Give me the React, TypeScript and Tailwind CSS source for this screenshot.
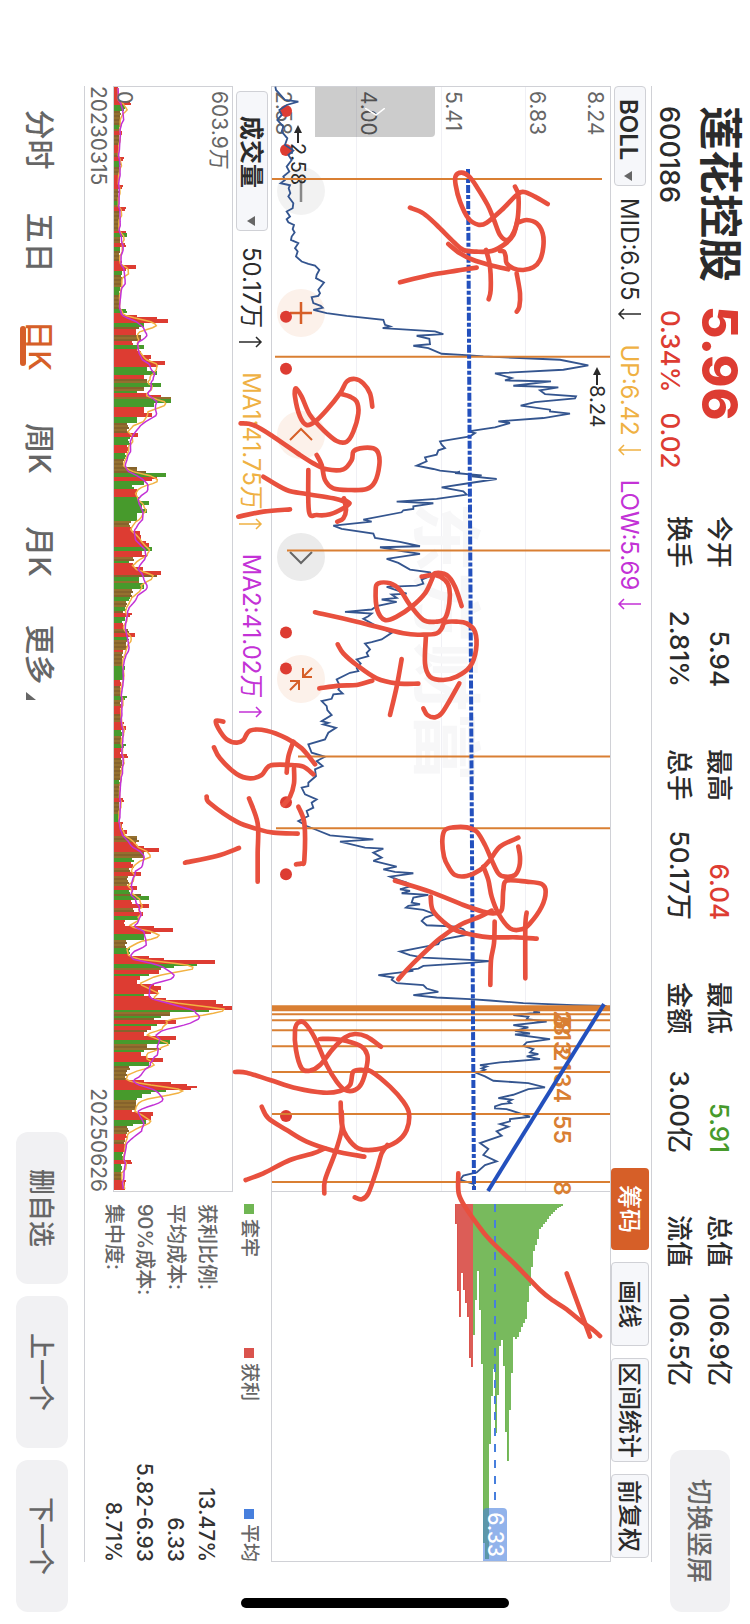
import type { ReactNode } from "react";

type Point = [number, number];

/* Drawing units are thirds of a pixel, measured with the phone held upright. */
const UPRIGHT = "matrix(0 -1 1 0 0 750)";
const ROWS = [
  "translate(190 60) scale(0.33333)",
  "translate(190 460) scale(0.33333)",
  "translate(190 860) scale(0.33333)",
];

const toPoints = (text: string): Point[] =>
  text
    .trim()
    .split(/\s+/)
    .map((pair) => pair.split(",").map(Number) as Point);

function smooth(text: string) {
  const p = toPoints(text);
  let d = `M${p[0][0]} ${p[0][1]}`;
  for (let i = 0; i < p.length - 1; i++) {
    const a = p[i - 1] ?? p[i];
    const b = p[i];
    const c = p[i + 1];
    const e = p[i + 2] ?? c;
    d += `C${b[0] + (c[0] - a[0]) / 6} ${b[1] + (c[1] - a[1]) / 6} ${c[0] - (e[0] - b[0]) / 6} ${c[1] - (e[1] - b[1]) / 6} ${c[0]} ${c[1]}`;
  }
  return d;
}

const PRICE = [
  "256,80 258,90 272,105 285,120 325,125 290,135 268,150 275,165 262,180 280,200 275,215 292,235 285,255 310,272 295,285 305,300 290,320 298,335 280,350 285,360 272,370 300,376 296,385 301,400 295,410 310,430 308,445 290,455 300,470 290,478 295,487 312,495 308,508 314,518 305,530 303,540 325,550 315,565 323,575 318,590 335,605 355,612 375,617 388,630 380,645 378,655 402,668 385,690 390,700 385,708 365,712 370,730 392,738 398,744 370,750 410,760 470,768 580,780 585,795 600,800 578,805 735,815 760,823 680,828 718,837 720,853 670,858 715,865 755,882 840,887 880,890 1110,900 1195,917 1120,930 915,941 965,955 945,962 1083,965 970,978 1105,983 1050,992 1065,1003 1158,1010 1155,1016 1035,1027 992,1038 1080,1050 1080,1055 1140,1062 1060,1075 925,1085 960,1090 915,1103 835,1115 855,1120 840,1130 750,1145 755,1155 765,1165 745,1172 740,1185 705,1193 710,1205 680,1218 730,1228 750,1233 800,1238",
  "800,38 810,36 795,40 875,47 845,50 920,58 840,70 755,83 820,95 830,105 740,118 620,126 730,131 670,140 670,148 640,152 635,158 520,180 545,186 430,198 455,208 550,222 555,235 630,247 690,260 570,263 640,275 690,283 590,298 625,310 660,330 720,338 725,348 695,360 700,372 680,378 590,382 650,402 605,405 620,415 575,420 620,427 560,440 545,450 465,457 545,462 535,470 520,478 560,500 605,520 575,540 545,548 525,552 540,570 530,580 535,590 500,600 512,612 500,625 505,635 480,640 440,660 450,680 445,690 458,702 430,705 425,718 395,725 410,740 412,752 425,767 395,785 415,790 400,795 438,805 415,820 405,840 355,855 365,880 405,892 380,905 398,920 375,930 378,950 355,970 355,980 335,985 345,1005 380,1020 365,1030 370,1045 350,1055 355,1070 325,1085 350,1100 380,1112 420,1128 550,1140 450,1147 525,1165 580,1168 550,1180 575,1195 550,1205",
  "550,5 620,22 580,30 615,38 670,42 600,52 625,62 650,70 665,80 630,90 660,95 635,102 715,107 670,115 665,130 690,135 655,140 648,145 700,152 735,165 705,175 695,185 710,198 800,202 820,210 825,216 840,225 770,238 750,245 745,255 690,265 630,277 660,288 700,295 840,302 900,306 840,311 700,320 685,328 655,332 670,335 565,348 610,355 605,362 620,372 700,378 710,388 745,398 670,408 740,415 840,420 900,424 1000,432 1150,438 1250,440",
  "1030,457 1050,460 970,468 1015,473 1010,480 1070,487 970,498 1015,505 975,515 1020,523 975,526 1080,540 1010,550 1000,560 1030,570 1020,580 1045,585 1010,592 1050,600 930,610 870,618 890,622 875,628 885,632 860,642 885,652 910,665 1015,672 1065,685 1015,690 970,707 925,717 965,722 955,727 962,732 935,735 915,742 915,748 950,750 1020,773 960,780 960,787 930,795 955,803 920,817 935,830 870,852 895,870 880,888 920,907 885,918 860,940 820,950 810,962 850,975 855,990",
];

const INK: string[][] = [
  [
    "1073,432 1035,410 1002,396 980,405 935,450 890,488 865,494 835,475 810,425 797,375 797,348 815,338 838,350 860,380 893,435 912,480 930,525 952,540 972,515 983,475 986,430 984,400 975,380",
    "983,480 970,525 945,552 905,573 860,575 820,570 790,545 740,495 700,460 660,443",
    "985,487 1010,480 1040,490 1058,520 1060,560 1050,600 1030,622 1000,630 970,625 950,610 947,590 942,575 930,573",
    "955,628 900,615 850,600 810,580 775,552",
    "860,623 800,632 720,645 630,667",
    "888,570 900,620 902,690 896,718",
    "980,640 990,700 988,740 980,755",
    "547,1040 540,1000 520,970 495,957 470,965 450,1000 410,1050 375,1085 350,1095 330,1070 315,1010 318,985 335,1010 360,1065 400,1110 440,1143 470,1145 490,1115 505,1060 500,1025 480,1010 455,1002",
    "152,1090 190,1095 250,1130 330,1185 370,1210 410,1228 460,1228 485,1200 490,1175 510,1165 550,1165 565,1180 568,1215 555,1265 530,1287 480,1290 430,1285 405,1260 395,1215 380,1185",
  ],
  [
    "220,50 290,90 350,102 430,115 478,130",
    "355,30 357,155 380,165 420,163 460,145 478,130 460,118",
    "462,115 468,150 460,175 442,185",
    "300,148 220,155 145,170",
    "815,438 795,380 770,345 735,340 725,360 705,400 665,440 620,470 585,480 562,450 557,390 565,370 600,370 630,390 660,435 700,480 740,485 765,475 778,430 778,385 765,360 735,345 695,350",
    "375,457 500,485 640,520 700,524 740,520 755,505 765,487 800,485 830,490 855,515 858,570 840,620 800,650 760,660 720,650 705,610 708,525",
    "443,553 460,580 500,615 560,655 620,670 685,671",
    "635,597 620,680 600,765",
    "547,662 500,675 450,677 388,685",
    "808,670 780,720 755,760 735,772 712,765 700,745",
    "100,785 78,782 85,805 110,838 140,848 160,840 180,812 230,812 290,835 335,865 375,913",
    "310,845 295,890 290,938",
    "72,862 90,895 140,942 180,955 215,945 240,917 300,915 340,920 370,943",
    "312,925 312,970 300,1010 280,1035",
    "50,1010 60,1030 140,1085 205,1108 250,1118 323,1121",
    "177,1015 203,1090 203,1180 203,1265",
    "147,1164 80,1188 -15,1208",
    "325,1040 343,1090 343,1200 335,1210 318,1213",
  ],
  [
    "985,-67 930,-40 900,0 870,30 830,48 795,45 775,20 762,-10 757,-60 765,-90 790,-98 830,-98 860,-85 885,-45 905,0 925,40 945,50 975,45 988,20 990,-10 985,-40",
    "880,20 895,60 905,110 925,160 960,205 995,208 1020,190 1055,140 1067,95 1055,72 1010,65 950,62 940,90 935,150 910,160 880,155 820,135 720,95 615,62",
    "905,152 870,170 810,195 750,235 690,290 650,330 625,358",
    "722,110 728,150 760,185 800,212 850,225 900,232 980,232 1040,236",
    "914,185 912,250 903,300 901,375",
    "1010,158 1006,200 1006,355",
    "573,560 530,530 495,522 465,532 430,565 390,615 360,632 335,625 318,570 315,510 325,488 345,490 375,535 410,615 440,665 465,690 495,690 515,670 530,620 532,585 515,560 470,543 430,537 390,537",
    "135,636 170,638 240,660 320,685 400,698 450,693 480,675 490,635 520,630 545,635 600,680 640,725 657,760 650,810 620,845 560,868 505,865 470,830 455,790 452,728",
    "455,755 455,810 435,880 405,960 403,1000",
    "592,855 575,880 560,930 535,1000 515,1018 494,1012",
    "215,740 235,775 290,810 350,845 430,872 523,890",
    "405,865 370,880 300,900 220,940 167,960",
    "805,940 806,1000 825,1040 860,1090 900,1140 980,1218 1050,1290 1090,1322 1130,1348 1175,1385 1210,1410 1230,1428",
    "1130,1240 1200,1430",
  ],
];

/* Volume runs: end position, colour (r rise, g fall, m mixed), height. */
const VOLUME: { from: number; runs: string }[] = [
  {
    from: 0,
    runs: "122r14 134r52 150g35 195m20 205g18 213m16 225r27 255m16 280r14 290m14 302r30 322g20 345m15 375r14 385r26 420m14 432g14 440m15 452r36 512m16 520r40 530g40 548m20 560r37 570g20 605m18 615r25 627r66 633r42 645g25 680m25 702g18 745m18 757g40 767r30 772r70 778r130 788r162 800g90 808m75 822r65 840m80 855r60 865g90 875r70 885r80 897r112 903r105 915r152 921r130 933g100 945g130 957r90 968m100 980g140 993m90 1000g70 1005r100 1011r140 1017m170 1028g172 1040g120 1060r90 1072r115 1090g70 1118m45 1130r72 1155g50 1178r45 1195g35 1222m30 1235m68 1240m95 1250g155 1258r130 1265r115 1275g90 1287g60 1310r70 1322g75",
  },
  {
    from: 1320,
    runs: "15g105 25g85 38g98 60g70 80m50 92r60 105r78 120r80 130r95 142r105 152g114 162r85 172r100 180m60 188g50 200r60 213r88 225r140 232m130 240g75 250m75 265g90 288m60 305g50 320m40 330g35 338m30 350r55 360g35 370g28 388r30 398m45 410r62 425g50 450m40 460r30 500m28 515g34 540g30 560r22 590m22 602g38 620m22 645r22 668m25 680r32 692r38 712g25 735m22 747g36 765r22 777r42 800m25 840m22 855g18 895m18 908r30 945m16 968g16 980r28 992r26 1005r42 1012r35 1020m70 1030m75 1040r65 1047r90 1058r136 1075m90 1090g60 1105r60 1118m50 1130r82 1160m45 1172r68 1185g50",
  },
  {
    from: 2460,
    runs: "20m50 32r67 45g60 50m82 62g105 75r60 87r104 98m60 110r86 125g72 140r35 147r120 158r178 165r110 180g90 205m40 222g50 232r42 237r105 243r150 255r302 261g250 267g180 275m140 285r135 292g105 303r78 315r70 322r120 333r140 345r132 350g90 358r110 364r155 375r305 381r328 392r355 400g285 410m168 417g140 424m120 435r186 442g130 452r110 460m100 472r90 484r187 495g168 505m100 512m140 518g90 530r80 538r100 549r146 560g105 572m50 600m40 606r90 612r172 618r220 628r248 633r232 640g155 645g110 655g85 665g70 690m65 700r60 710r118 722r110 732g95 740g58 765m45 780r38 792m35 820r35 840g28 855r57 880g25 900m25 936r35",
  },
];

const RUNS = VOLUME.flatMap(({ from, runs }) =>
  runs.split(" ").map((run) => {
    const [, end, tone, high] = run.match(/(\d+)([rgm])(\d+)/)!;
    return { end: from + Number(end), tone, high: Number(high) };
  }),
);

const BARS = Array.from({ length: 552 }, (_, i) => {
  const at = 83 + i * 6;
  const run = RUNS.find((r) => r.end > at) ?? RUNS[RUNS.length - 1];
  const wobble = ((i * 37) % 11) / 11;
  const high = (run.high * (run.high > 60 ? 1 : 0.86 + wobble * 0.16)) / 3;
  const fill =
    run.tone === "r" ? "#dd3c32" : run.tone === "g" ? "#479a2c" : i % 2 ? "#94702f" : "#86632c";
  return { y: 87 + i * 2, high, fill };
});

const average = (size: number) =>
  BARS.map((bar, i) => {
    const part = BARS.slice(Math.max(0, i - size + 1), i + 1);
    const mean = part.reduce((sum, b) => sum + b.high, 0) / part.length;
    return `${(114 + mean).toFixed(1)},${bar.y + 1}`;
  }).join(" ");

/* Cost distribution: price position and bar end. */
const CHIPS = toPoints(
  "562,1207 560,1208 558,1209 556,1211 554,1213 552,1215 550,1217 548,1220 546,1223 544,1225 542,1228 540,1230 538,1240 536,1246 534,1252 532,1268 530,1287 528,1303 526,1320 524,1324 522,1328 520,1333 518,1338 516,1340 514,1338 512,1374 510,1411 508,1462 506,1433 504,1367 502,1341 500,1347 498,1396 496,1434 494,1370 492,1397 490,1445 488,1560 486,1560 484,1544 482,1365 480,1311 478,1272 476,1301 474,1336 472,1368 470,1359 468,1318 466,1304 464,1291 462,1274 460,1318 458,1292 456,1225",
);

const FIBONACCI: [string, number][] = [
  ["2", 1010],
  ["3", 1012],
  ["5", 1015],
  ["8", 1021],
  ["13", 1031],
  ["21", 1047],
  ["34", 1073],
  ["55", 1115],
  ["8", 1181],
];

const CYCLES = [
  [179, 272, 602],
  [357, 275, 610],
  [551, 287, 610],
  [757, 298, 610],
  [829, 276, 610],
];
const DOTS = [111, 150, 317, 369, 633, 669, 803, 875, 1117];

function Trend({ up = false }: { up?: boolean }) {
  return (
    <svg className="h-6 w-3 shrink-0" viewBox="0 0 12 24" fill="none" stroke="currentColor" strokeWidth="1.5">
      <path d={up ? "M6 24V2M1 7l5-5 5 5" : "M6 0v22M1 17l5 5 5-5"} />
    </svg>
  );
}

function Caret() {
  return (
    <svg className="h-2 w-2.5" viewBox="0 0 10 8" fill="#666">
      <path d="M0 0h10L5 8z" />
    </svg>
  );
}

function Reading({ label, tone, up }: { label: string; tone: string; up?: boolean }) {
  return (
    <span className={`flex items-center gap-2 ${tone}`}>
      {label}
      <Trend up={up} />
    </span>
  );
}

function RoundButton({ label, tone, children }: { label: string; tone: string; children: ReactNode }) {
  return (
    <button type="button" aria-label={label} className={`flex size-12 items-center justify-center rounded-full ${tone}`}>
      <svg className="size-6" viewBox="0 0 24 24" fill="none" stroke="currentColor" strokeWidth="2.5">
        {children}
      </svg>
    </button>
  );
}

const STATS = [
  ["今开", "5.94", "换手", "2.81%", "text-[#2b2b2b]"],
  ["最高", "6.04", "总手", "50.17万", "text-[#dd3c32]"],
  ["最低", "5.91", "金额", "3.00亿", "text-[#479a2c]"],
  ["总值", "106.9亿", "流值", "106.5亿", "text-[#2b2b2b]"],
];

function Header() {
  return (
    <header className="flex h-[98px] shrink-0 pl-[106px] pr-3">
      <div className="grid w-[410px] shrink-0 grid-cols-[200px_1fr] grid-rows-[60px_40px] items-center">
        <h1 className="text-[44px] font-semibold leading-none">莲花控股</h1>
        <p className="text-[50px] font-extrabold leading-none text-[#dd3c32]">5.96</p>
        <p className="text-[27px] font-medium leading-none">600186</p>
        <p className="flex gap-5 pl-1 text-[26px] font-medium leading-none text-[#dd3c32]">
          <span>0.34%</span>
          <span>0.02</span>
        </p>
      </div>
      <div className="mr-16 grid flex-1 grid-cols-4 gap-x-[62px] pt-[11px]">
        {STATS.map(([a, av, b, bv, tone]) => (
          <dl key={a} className="grid grid-cols-[auto_1fr] grid-rows-[40px_40px] items-center text-[26px] font-medium leading-none">
            <dt>{a}</dt>
            <dd className={`text-right ${tone}`}>{av}</dd>
            <dt>{b}</dt>
            <dd className="text-right">{bv}</dd>
          </dl>
        ))}
      </div>
      <button type="button" className="mt-5 h-[60px] w-[162px] shrink-0 rounded-xl bg-[#f1f1f3] text-[26px] font-medium text-[#666]">
        切换竖屏
      </button>
    </header>
  );
}

function Toolbar() {
  const tool =
    "flex h-[38px] items-center justify-center whitespace-nowrap rounded border border-[#d0d1d6] bg-[#f6f7fa] pt-0.5 font-medium";
  return (
    <div className="ml-[86px] mr-[62px] flex h-[41px] shrink-0 items-center border-t border-[#d0d1d6] pt-0.5 text-[24px] leading-none">
      <button type="button" className="mr-3 flex h-8 w-[100px] items-center justify-between rounded border border-[#d0d1d6] bg-[#f6f7fa] pl-3 pr-1 pt-1 font-semibold">
        BOLL
        <Caret />
      </button>
      <div className="flex gap-6 pt-0.5 text-[24px] font-normal">
        <Reading label="MID:6.05" tone="text-[#2b2b2b]" />
        <Reading label="UP:6.42" tone="text-[#efb143]" />
        <Reading label="LOW:5.69" tone="text-[#c332d6]" />
      </div>
      <div className="ml-auto mr-1 flex gap-3">
        <button type="button" className="flex h-[38px] w-[82px] items-center justify-center rounded bg-[#d65f28] pt-0.5 font-medium text-white">
          筹码
        </button>
        <button type="button" className={`${tool} w-[84px]`}>画线</button>
        <button type="button" className={`${tool} w-[104px]`}>区间统计</button>
        <button type="button" className={`${tool} w-[84px]`}>前复权</button>
      </div>
    </div>
  );
}

function PriceChart() {
  return (
    <section className="relative min-h-0 flex-1 border border-[#d0d1d6]">
      <div className="absolute inset-0 grid grid-rows-4 text-[21px] leading-[22px] text-[#666]">
        {["6.83", "5.41", "4.00", "2.58"].map((label, i) => (
          <div key={label} className="flex flex-col justify-between border-b border-[#f0f0f5] pl-1 pt-1 last:border-b-0">
            <span>{i === 0 ? "8.24" : ""}</span>
            <span>{label}</span>
          </div>
        ))}
      </div>
      <p className="absolute left-[415px] top-[130px] text-[70px] font-bold leading-none text-[#f7f7f8]">东方财富</p>
      <div className="absolute bottom-[5px] left-20 flex gap-[74px]">
        <RoundButton label="缩小" tone="bg-black/5 text-[#888]">
          <path d="M1 12h22" />
        </RoundButton>
        <RoundButton label="放大" tone="bg-[#fcf1ea] text-[#d65f28]">
          <path d="M1 12h22M12 1v22" />
        </RoundButton>
        <RoundButton label="左移" tone="bg-[#fcf1ea] text-[#d65f28]">
          <path d="M17 1L6 12l11 11" strokeWidth="2" />
        </RoundButton>
        <RoundButton label="右移" tone="bg-[#ebebeb] text-[#666]">
          <path d="M7 1l11 11L7 23" strokeWidth="2" />
        </RoundButton>
        <RoundButton label="收起" tone="bg-[#fcf1ea] text-[#d65f28]">
          <path d="M1 1l9 9M10 1v9H1M23 23l-9-9M14 23v-9h9" strokeWidth="2" />
        </RoundButton>
      </div>
      <p className="absolute left-[280px] top-[3px] flex items-center text-[20px] leading-none">
        <svg className="h-3 w-[18px]" viewBox="0 0 18 12" fill="#2b2b2b">
          <path d="M0 6l8-4v3h10v2H8v3z" />
        </svg>
        8.24
      </p>
      <p className="absolute bottom-4 left-[38px] flex items-center text-[20px] leading-none">
        <svg className="h-3 w-[18px]" viewBox="0 0 18 12" fill="#2b2b2b">
          <path d="M0 6l8-4v3h10v2H8v3z" />
        </svg>
        2.58
      </p>
      <button type="button" aria-label="展开" className="absolute left-0 top-[175px] flex h-[120px] w-[50px] items-center justify-center rounded-tr bg-black/20">
        <svg className="h-5 w-2" viewBox="0 0 8 20" fill="none" stroke="#fff" strokeWidth="1.5">
          <path d="M0 0l7 9-7 11" />
        </svg>
      </button>
      <svg
        className="pointer-events-none absolute inset-0 h-full w-full overflow-visible"
        viewBox="87 140 1105 338"
        preserveAspectRatio="none"
      >
        <g fill="#d97f33" fontSize="23" fontWeight="600">
          {FIBONACCI.map(([label, x]) => (
            <text key={x} x={x + 1} y="196">
              {label}
            </text>
          ))}
        </g>
        <g transform={UPRIGHT}>
          <g fill="#dd3c32">
            {DOTS.map((y) => (
              <circle key={y} cx="286" cy={y} r="6" />
            ))}
          </g>
          <g fill="none" stroke="#34558f" strokeWidth="5.5">
            {PRICE.map((line, i) => (
              <polyline key={i} transform={ROWS[Math.min(i, 2)]} points={line} />
            ))}
          </g>
          <g stroke="#d97f33" strokeWidth="2">
            {CYCLES.map(([y, start, end]) => (
              <path key={y} d={`M${start} ${y}H${end}`} />
            ))}
            {[1015, 1021, 1031, 1047, 1073, 1115, 1183].map((y) => (
              <path key={y} d={`M272 ${y}H610`} />
            ))}
            <path d="M272 1009H610" strokeWidth="6" />
          </g>
          <g fill="none" stroke="#2350bd" strokeWidth="4">
            <path d="M468 169L474 1191" strokeDasharray="8 2 4 2" />
            <path d="M604 1005L488 1192" />
          </g>
        </g>
      </svg>
    </section>
  );
}

function VolumeChart() {
  return (
    <section className="relative h-[120px] shrink-0 border border-[#d0d1d6]">
      <div className="absolute inset-0 z-10 flex flex-col justify-between pl-1 pt-0.5 text-[21px] leading-none text-[#666]">
        <span>603.9万</span>
        <span>0</span>
      </div>
      <svg className="absolute inset-0 h-full w-full" viewBox="87 518 1105 118" preserveAspectRatio="none">
        <g transform={UPRIGHT}>
          <g shapeRendering="crispEdges">
            {BARS.map((bar) => (
              <rect key={bar.y} x="114" y={bar.y} width={bar.high} height="2" fill={bar.fill} />
            ))}
          </g>
          <g fill="none" strokeWidth="1.5">
            <polyline points={average(5)} stroke="#f2b243" />
            <polyline points={average(10)} stroke="#c332d6" />
          </g>
        </g>
      </svg>
    </section>
  );
}

function ChipPanel() {
  const rows = [
    ["获利比例:", "13.47%"],
    ["平均成本:", "6.33"],
    ["90%成本:", "5.82-6.93"],
    ["集中度:", "8.71%"],
  ];
  return (
    <aside className="flex w-[370px] shrink-0 flex-col">
      <div className="relative min-h-0 flex-1 border-y border-r border-[#d0d1d6]">
        <svg className="absolute inset-0 h-full w-full" viewBox="1193 140 369 338" preserveAspectRatio="none">
          <g transform={UPRIGHT}>
            {CHIPS.map(([x, end]) => (
              <path key={x} d={`M${x} 1205V${end}`} stroke={x > 473 ? "#70b653" : "#da534d"} strokeWidth="2" />
            ))}
            {CHIPS.map(([x, end]) => (
              <path key={x} d={`M${x + 1} 1205V${end}`} stroke="#fff" strokeOpacity="0.2" strokeWidth="0.6" />
            ))}
            <path d="M495 1205V1502" stroke="#477fdd" strokeWidth="2" strokeDasharray="8 8" />
          </g>
        </svg>
        <span className="absolute right-0 top-[103px] rounded-l bg-[#4a80dd]/60 px-1 text-[21px] font-medium leading-6 text-white">6.33</span>
      </div>
      <div className="flex h-[41px] items-center pl-3 pt-0.5 text-[19px] font-medium leading-none text-[#666]">
        <span className="flex w-36 items-center gap-[5px]">
          <i className="size-2.5 bg-[#70b653]" />
          套牢
        </span>
        <span className="flex flex-1 items-center gap-[5px]">
          <i className="size-2.5 bg-[#da534d]" />
          获利
        </span>
        <span className="flex items-center gap-[5px]">
          <i className="size-2.5 bg-[#477fdd]" />
          平均
        </span>
      </div>
      <dl className="h-[145px] pl-3 pt-2 text-[20px] leading-[31px]">
        {rows.map(([name, value]) => (
          <div key={name} className="flex justify-between">
            <dt className="font-medium text-[#666]">{name}</dt>
            <dd className="text-[21px] font-medium text-[#333]">{value}</dd>
          </div>
        ))}
      </dl>
    </aside>
  );
}

function Footer() {
  return (
    <footer className="flex h-[84px] shrink-0 items-center justify-between pl-[88px] pr-3">
      <nav className="flex text-[30px] font-medium leading-none text-[#666]">
        {["分时", "五日", "日K", "周K", "月K", "更多"].map((name) => (
          <a
            key={name}
            href={`#${name}`}
            className={`relative flex h-14 w-[103px] items-center justify-center pt-1 ${name === "日K" ? "text-[#d65f28]" : ""}`}
          >
            {name}
            {name === "日K" && <span className="absolute bottom-1.5 h-1.5 w-10 rounded-full bg-[#d65f28]" />}
            {name === "更多" && (
              <svg className="absolute bottom-3 right-1 size-2.5" viewBox="0 0 10 10" fill="#666">
                <path d="M8 0v10H0z" />
              </svg>
            )}
          </a>
        ))}
      </nav>
      <div className="flex gap-3 text-[26px] font-medium text-[#666]">
        {["删自选", "上一个", "下一个"].map((name) => (
          <button key={name} type="button" className="h-[52px] w-[152px] rounded-xl bg-[#f1f1f3]">
            {name}
          </button>
        ))}
      </div>
    </footer>
  );
}

export default function App() {
  return (
    <div className="relative h-screen w-screen overflow-hidden bg-white font-['Inter','Noto_Sans_CJK_SC',sans-serif] text-[#2b2b2b]">
      <main className="absolute left-full top-0 flex h-[100vw] w-[100vh] origin-top-left rotate-90 flex-col">
        <Header />
        <Toolbar />
        <div className="ml-[86px] mr-[62px] flex min-h-0 flex-1 border-b border-[#d0d1d6]">
          <div className="flex min-w-0 flex-1 flex-col">
            <PriceChart />
            <div className="flex h-[38px] shrink-0 items-center pl-[5px] text-[24px] font-normal leading-none">
              <button type="button" className="mr-4 flex h-8 w-[140px] items-center justify-between rounded border border-[#d0d1d6] bg-[#f6f7fa] pl-6 pr-1 pt-0.5 font-semibold">
                成交量
                <Caret />
              </button>
              <div className="flex gap-6 pt-0.5">
                <Reading label="50.17万" tone="text-[#2b2b2b]" up />
                <Reading label="MA1:41.75万" tone="text-[#efb143]" up />
                <Reading label="MA2:41.02万" tone="text-[#c332d6]" up />
              </div>
            </div>
            <VolumeChart />
            <div className="flex h-7 shrink-0 items-center justify-between text-[21px] leading-none text-[#666]">
              <time>20230315</time>
              <time>20250626</time>
            </div>
          </div>
          <ChipPanel />
        </div>
        <Footer />
        <svg className="pointer-events-none absolute inset-0 z-20 h-full w-full" viewBox="0 0 1624 750" preserveAspectRatio="none">
          <g transform={UPRIGHT} fill="none" stroke="#e8503e" strokeWidth="14" strokeLinecap="round" strokeLinejoin="round">
            {INK.map((strokes, row) => (
              <g key={row} transform={ROWS[row]}>
                {strokes.map((stroke) => (
                  <path key={stroke} d={smooth(stroke)} />
                ))}
              </g>
            ))}
          </g>
        </svg>
        <span className="absolute right-4 top-[241px] h-[268px] w-2.5 rounded-full bg-black" />
      </main>
    </div>
  );
}
